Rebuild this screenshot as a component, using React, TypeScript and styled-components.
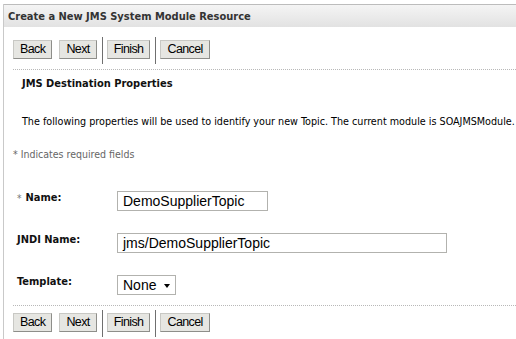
import styled, { createGlobalStyle } from 'styled-components'

const tahoma = `"DejaVu Sans Condensed", "DejaVu Sans", sans-serif`
const arial = `"Liberation Sans", Arial, sans-serif`

const GlobalStyle = createGlobalStyle`
  html, body {
    margin: 0;
    padding: 0;
    background: #ffffff;
  }
  body {
    font-family: ${tahoma};
    color: #000;
    overflow: hidden;
  }
`

const Page = styled.div`
  width: 516px;
  height: 339px;
  padding: 4px 0 0 3px;
  box-sizing: border-box;
`

const Panel = styled.div`
  border-left: 1px solid #c9c9c9;
  height: 100%;
`

const Header = styled.div`
  height: 22px;
  border-top: 1px solid #bcbcbc;
  background: linear-gradient(#f4f4f4, #e2e2e2);
  display: flex;
  align-items: center;
  padding-left: 4px;
`

const Title = styled.h1`
  margin: 0;
  font-size: 11px;
  font-weight: bold;
  color: #333;
  white-space: nowrap;
`

const Content = styled.div`
  padding-left: 9px;
`

const ButtonBar = styled.div<{ $top: number }>`
  display: flex;
  align-items: flex-start;
  height: 27px;
  margin-top: ${(p) => p.$top}px;
`

const Button = styled.button<{ $first?: boolean }>`
  height: 19px;
  margin: 3px 0 0 ${(p) => (p.$first ? 0 : 7)}px;
  padding: 0 6px;
  font-family: ${arial};
  font-size: 12.5px;
  letter-spacing: -0.6px;
  color: #000;
  background: #e6e6e2;
  border: 1px solid;
  border-color: #c8c8c4 #8e8e8a #8e8e8a #c8c8c4;
  line-height: 17px;
`

const Separator = styled.span`
  width: 1px;
  height: 27px;
  background: #6f6f6f;
  margin: 0 4px 0 5px;
`

const Divider = styled.div<{ $top: number }>`
  margin-top: ${(p) => p.$top}px;
  border-top: 1px dotted #b8b8b8;
`

const SectionTitle = styled.h2`
  margin: 7px 0 0 9px;
  font-size: 11px;
  line-height: 14px;
  font-weight: bold;
  color: #111;
`

const Intro = styled.p`
  margin: 24px 0 0 9px;
  font-size: 10.7px;
  line-height: 14px;
  white-space: nowrap;
`

const Note = styled.p`
  margin: 18px 0 0 0;
  font-size: 10.5px;
  line-height: 14px;
  color: #666;
`

const Form = styled.div`
  margin-top: 30px;
  display: flex;
  flex-direction: column;
  gap: 22px;
`

const Field = styled.div`
  display: flex;
  align-items: flex-start;
  height: 20px;
`

const Label = styled.label`
  width: 100px;
  padding-left: 4px;
  font-size: 11px;
  line-height: 14px;
  font-weight: bold;
  color: #111;
  display: flex;
  align-items: flex-start;
`

const Required = styled.span`
  color: #777;
  font-weight: normal;
  font-size: 10px;
  line-height: 10px;
  margin: 3px 4px 0 0;
`

const TextInput = styled.div<{ $width: number }>`
  width: ${(p) => p.$width}px;
  height: 20px;
  box-sizing: border-box;
  border: 1px solid #b2b2ae;
  padding-left: 5px;
  font-family: ${arial};
  font-size: 14px;
  line-height: 18px;
  color: #000;
`

const SelectBox = styled.div`
  width: 59px;
  height: 20px;
  box-sizing: border-box;
  border: 1px solid #b2b2ae;
  padding: 0 5px;
  display: flex;
  align-items: center;
  justify-content: space-between;
  font-family: ${arial};
  font-size: 14px;
  color: #000;
`

const Arrow = styled.span`
  width: 0;
  height: 0;
  border-left: 3.5px solid transparent;
  border-right: 3.5px solid transparent;
  border-top: 4px solid #000;
  margin-top: 1px;
`

const Buttons = () => (
  <>
    <Button $first>Back</Button>
    <Button>Next</Button>
    <Separator />
    <Button $first>Finish</Button>
    <Separator />
    <Button $first>Cancel</Button>
  </>
)

export default function App() {
  return (
    <Page>
      <GlobalStyle />
      <Panel>
        <Header>
          <Title>Create a New JMS System Module Resource</Title>
        </Header>
        <Content>
          <ButtonBar $top={10}>
            <Buttons />
          </ButtonBar>
          <Divider $top={5} />
          <SectionTitle>JMS Destination Properties</SectionTitle>
          <Intro>
            The following properties will be used to identify your new Topic. The current module is
            SOAJMSModule.
          </Intro>
          <Note>* Indicates required fields</Note>
          <Form>
            <Field>
              <Label>
                <Required>*</Required>Name:
              </Label>
              <TextInput $width={151}>DemoSupplierTopic</TextInput>
            </Field>
            <Field>
              <Label>JNDI Name:</Label>
              <TextInput $width={330}>jms/DemoSupplierTopic</TextInput>
            </Field>
            <Field>
              <Label>Template:</Label>
              <SelectBox>
                None
                <Arrow />
              </SelectBox>
            </Field>
          </Form>
          <Divider $top={10} />
          <ButtonBar $top={4}>
            <Buttons />
          </ButtonBar>
        </Content>
      </Panel>
    </Page>
  )
}
